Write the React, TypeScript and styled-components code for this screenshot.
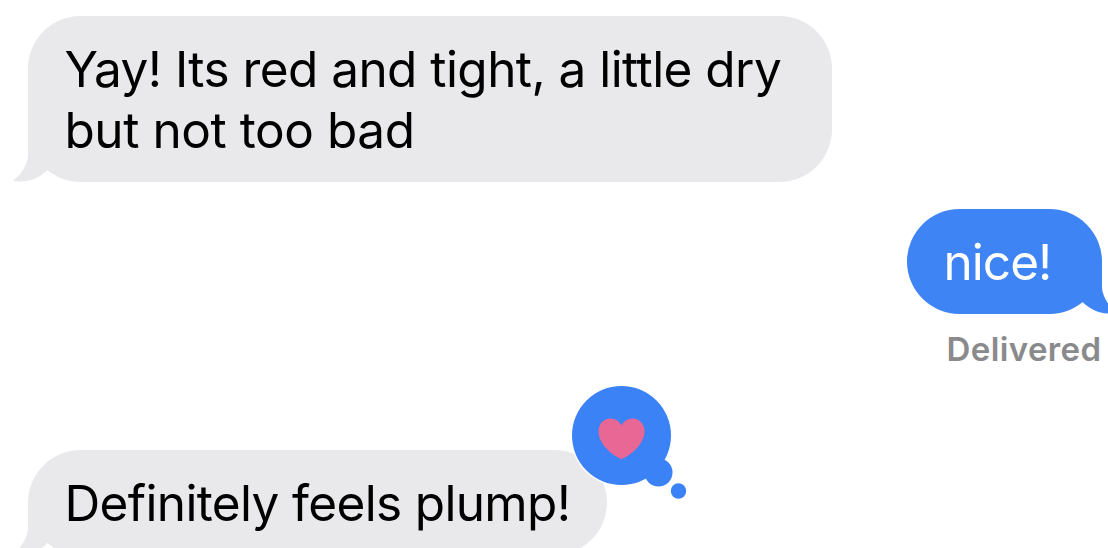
import React from "react";
import styled, { createGlobalStyle } from "styled-components";

const GlobalStyle = createGlobalStyle`
  body {
    margin: 0;
    background: #fff;
  }
`;

const GREY = "#e9e9eb";
const BLUE = "#3e84f5";

const Conversation = styled.main`
  box-sizing: border-box;
  display: flex;
  flex-direction: column;
  width: 1108px;
  height: 548px;
  padding: 16px 6px 0 28px;
  overflow: hidden;
  font-family: Inter, "Liberation Sans", sans-serif;
`;

const Bubble = styled.div<{ $sent?: boolean; $width: number }>`
  position: relative;
  box-sizing: border-box;
  flex-shrink: 0;
  align-self: ${({ $sent }) => ($sent ? "flex-end" : "flex-start")};
  width: ${({ $width }) => $width}px;
  padding: 23px 0 21px 36.5px;
  border-radius: 52.5px;
  background: ${({ $sent }) => ($sent ? BLUE : GREY)};
  color: ${({ $sent }) => ($sent ? "#fff" : "#000")};
`;

const Line = styled.div<{ $spacing: number }>`
  font-size: 49.5px;
  line-height: 61px;
  letter-spacing: ${({ $spacing }) => $spacing}px;
  white-space: nowrap;
`;

const TailSvg = styled.svg<{ $sent?: boolean }>`
  position: absolute;
  bottom: 0;
  ${({ $sent }) => ($sent ? "right: -16px; transform: scaleX(-1);" : "left: -16px;")}
`;

const Status = styled.div`
  align-self: flex-end;
  margin: 15px 0.5px 80px 0;
  color: #8a8a8c;
  font-size: 33px;
  font-weight: 600;
  line-height: 41px;
  letter-spacing: 0.4px;
`;

const Gap = styled.div`
  flex: 0 0 27px;
`;

const Reaction = styled.svg`
  position: absolute;
  top: -68px;
  right: -83px;
`;

const Tail = ({ sent }: { sent?: boolean }) => (
  <TailSvg $sent={sent} width='40' height='54' viewBox='0 0 40 54' fill={sent ? BLUE : GREY}>
    <path d='M16 0V28C15.5 36 9 48 0.5 52.8C14 55.5 27 51 36 41.5V0Z' />
  </TailSvg>
);

const HeartReaction = () => (
  <Reaction width='122' height='122' viewBox='0 0 122 122'>
    <circle cx='53.5' cy='53.5' r='51' fill='#fff' />
    <g fill='#3b82f6'>
      <circle cx='53.5' cy='53.5' r='49.5' />
      <circle cx='90.5' cy='90.5' r='14' />
      <circle cx='110.5' cy='109' r='7.7' />
    </g>
    <path
      fill='#e86795'
      d='M53.5 77C50 76.5 30.5 64.5 30.5 49.5C30.5 42 35.5 36.5 42.3 36.5C47.8 36.5 51.5 39.5 53.5 43.3C55.5 39.5 59.2 36.5 64.7 36.5C71.5 36.5 76.5 42 76.5 49.5C76.5 64.5 57 76.5 53.5 77Z'
    />
  </Reaction>
);

const App = () => (
  <>
    <GlobalStyle />
    <Conversation>
      <Bubble $width={804}>
        <Tail />
        <Line $spacing={-0.55}>Yay! Its red and tight, a little dry</Line>
        <Line $spacing={-0.44}>but not too bad</Line>
      </Bubble>
      <Gap />
      <Bubble $sent $width={195}>
        <Tail sent />
        <Line $spacing={-0.95}>nice!</Line>
      </Bubble>
      <Status>Delivered</Status>
      <Bubble $width={579}>
        <Tail />
        <Line $spacing={-0.65}>Definitely feels plump!</Line>
        <HeartReaction />
      </Bubble>
    </Conversation>
  </>
);

export default App;
